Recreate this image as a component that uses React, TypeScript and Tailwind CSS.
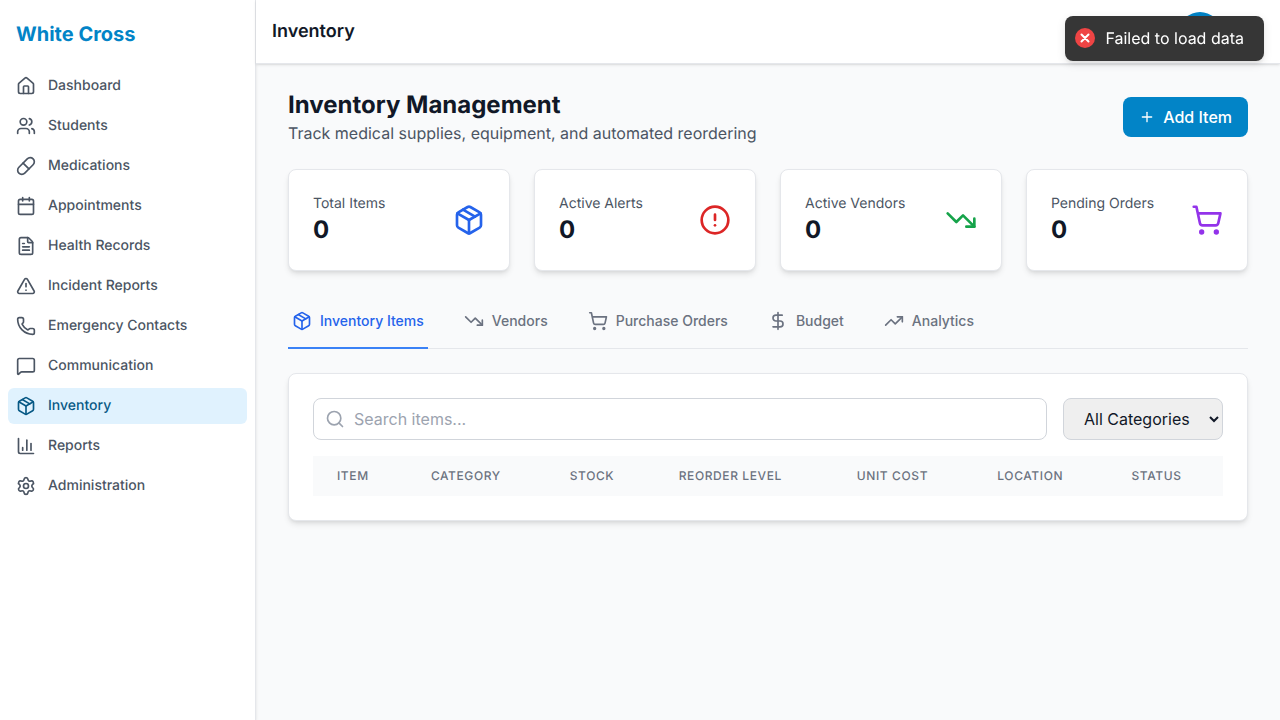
import {
  Home,
  Users,
  Pill,
  Calendar,
  FileText,
  AlertTriangle,
  Phone,
  MessageSquare,
  Package,
  BarChart3,
  Settings,
  Plus,
  AlertCircle,
  TrendingDown,
  TrendingUp,
  ShoppingCart,
  DollarSign,
  Search,
} from "lucide-react";

const navItems = [
  { label: "Dashboard", icon: Home },
  { label: "Students", icon: Users },
  { label: "Medications", icon: Pill },
  { label: "Appointments", icon: Calendar },
  { label: "Health Records", icon: FileText },
  { label: "Incident Reports", icon: AlertTriangle },
  { label: "Emergency Contacts", icon: Phone },
  { label: "Communication", icon: MessageSquare },
  { label: "Inventory", icon: Package, active: true },
  { label: "Reports", icon: BarChart3 },
  { label: "Administration", icon: Settings },
];

const stats = [
  { label: "Total Items", icon: Package, color: "text-[#2563eb]" },
  { label: "Active Alerts", icon: AlertCircle, color: "text-[#dc2626]" },
  { label: "Active Vendors", icon: TrendingDown, color: "text-[#16a34a]" },
  { label: "Pending Orders", icon: ShoppingCart, color: "text-[#9333ea]" },
];

const tabs = [
  { label: "Inventory Items", icon: Package, active: true },
  { label: "Vendors", icon: TrendingDown },
  { label: "Purchase Orders", icon: ShoppingCart },
  { label: "Budget", icon: DollarSign },
  { label: "Analytics", icon: TrendingUp },
];

const columns = ["Item", "Category", "Stock", "Reorder Level", "Unit Cost", "Location", "Status"];

export default function App() {
  return (
    <div className="flex h-screen bg-[#f9fafb] font-['Inter',sans-serif] [text-rendering:geometricPrecision] overflow-hidden">
      {/* Sidebar */}
      <aside className="w-64 shrink-0 bg-white border-r border-[#e5e7eb] shadow-sm">
        <div className="h-[68px] px-4 flex items-center">
          <h1 className="text-xl font-bold text-[#0284c7]">White Cross</h1>
        </div>
        <nav className="px-2 flex flex-col gap-1">
          {navItems.map((item) => (
            <a
              key={item.label}
              className={`flex items-center h-9 px-2 rounded-md text-sm font-medium ${
                item.active ? "bg-[#e0f2fe] text-[#075985]" : "text-[#4b5563]"
              }`}
            >
              <item.icon className="w-5 h-5 mr-3" />
              {item.label}
            </a>
          ))}
        </nav>
      </aside>

      {/* Main */}
      <div className="flex-1 min-w-0 flex flex-col">
        <header className="h-16 shrink-0 bg-white shadow-sm border-b border-[#e5e7eb] px-4 flex items-center justify-between">
          <h2 className="text-lg font-semibold text-[#111827]">Inventory</h2>
          <div className="w-10 h-10 rounded-full bg-[#0284c7] mr-[44px]" />
        </header>

        <main className="flex-1 p-8 pt-6 flex flex-col">
          <div className="flex items-center justify-between mb-6 mt-[1px]">
            <div>
              <h1 className="text-2xl font-bold text-[#111827] leading-8">Inventory Management</h1>
              <p className="text-[#4b5563] text-base leading-6">
                Track medical supplies, equipment, and automated reordering
              </p>
            </div>
            <button className="flex items-center h-10 px-4 rounded-lg bg-[#0284c7] text-white font-medium text-base">
              <Plus className="w-4 h-4 mr-2" />
              Add Item
            </button>
          </div>

          {/* Stats */}
          <div className="grid grid-cols-4 gap-6 mb-6">
            {stats.map((stat) => (
              <div
                key={stat.label}
                className="bg-white rounded-lg border border-[#e5e7eb] shadow-md p-6 flex items-center justify-between"
              >
                <div>
                  <p className="text-sm text-[#4b5563] leading-5">{stat.label}</p>
                  <p className="text-2xl font-bold text-[#111827] leading-8">0</p>
                </div>
                <stat.icon className={`w-8 h-8 ${stat.color}`} />
              </div>
            ))}
          </div>

          {/* Tabs */}
          <div className="border-b border-[#e5e7eb] flex gap-8 mb-6">
            {tabs.map((tab) => (
              <button
                key={tab.label}
                className={`flex items-center gap-2 px-1 py-4 border-b-2 -mb-px text-sm font-medium ${
                  tab.active ? "border-[#3b82f6] text-[#2563eb]" : "border-transparent text-[#6b7280]"
                }`}
              >
                <tab.icon className="w-5 h-5" />
                {tab.label}
              </button>
            ))}
          </div>

          {/* Table card */}
          <div className="bg-white rounded-lg border border-[#e5e7eb] shadow-md p-6">
            <div className="flex gap-4 mb-4">
              <div className="relative flex-1">
                <Search className="w-5 h-5 text-[#9ca3af] absolute left-3 top-1/2 -translate-y-1/2" />
                <input
                  placeholder="Search items..."
                  className="w-full h-[42px] pl-10 pr-4 border border-[#d1d5db] rounded-lg text-base placeholder:text-[#9ca3af]"
                />
              </div>
              <select className="h-[42px] w-40 pl-4 pr-1 border border-[#d1d5db] rounded-lg bg-[#efefef] text-base text-[#111827]">
                <option>All Categories</option>
              </select>
            </div>
            <table className="w-full">
              <thead className="bg-[#f9fafb]">
                <tr>
                  {columns.map((col) => (
                    <th
                      key={col}
                      className="px-6 py-3 text-left text-xs font-medium text-[#6b7280] uppercase tracking-wider"
                    >
                      {col}
                    </th>
                  ))}
                </tr>
              </thead>
            </table>
          </div>
        </main>
      </div>

      {/* Toast */}
      <div className="fixed top-4 right-4 flex items-center bg-[#363636] text-white rounded-lg px-2.5 py-2 shadow-[0_3px_10px_rgba(0,0,0,0.1),0_3px_3px_rgba(0,0,0,0.05)] text-base leading-[1.3]">
        <svg viewBox="0 0 20 20" className="w-5 h-5 shrink-0">
          <circle cx="10" cy="10" r="10" fill="#ef4444" />
          <path d="M6.5 6.5l7 7M13.5 6.5l-7 7" stroke="#fff" strokeWidth="2" strokeLinecap="round" />
        </svg>
        <span className="mx-2.5 my-1">Failed to load data</span>
      </div>
    </div>
  );
}
